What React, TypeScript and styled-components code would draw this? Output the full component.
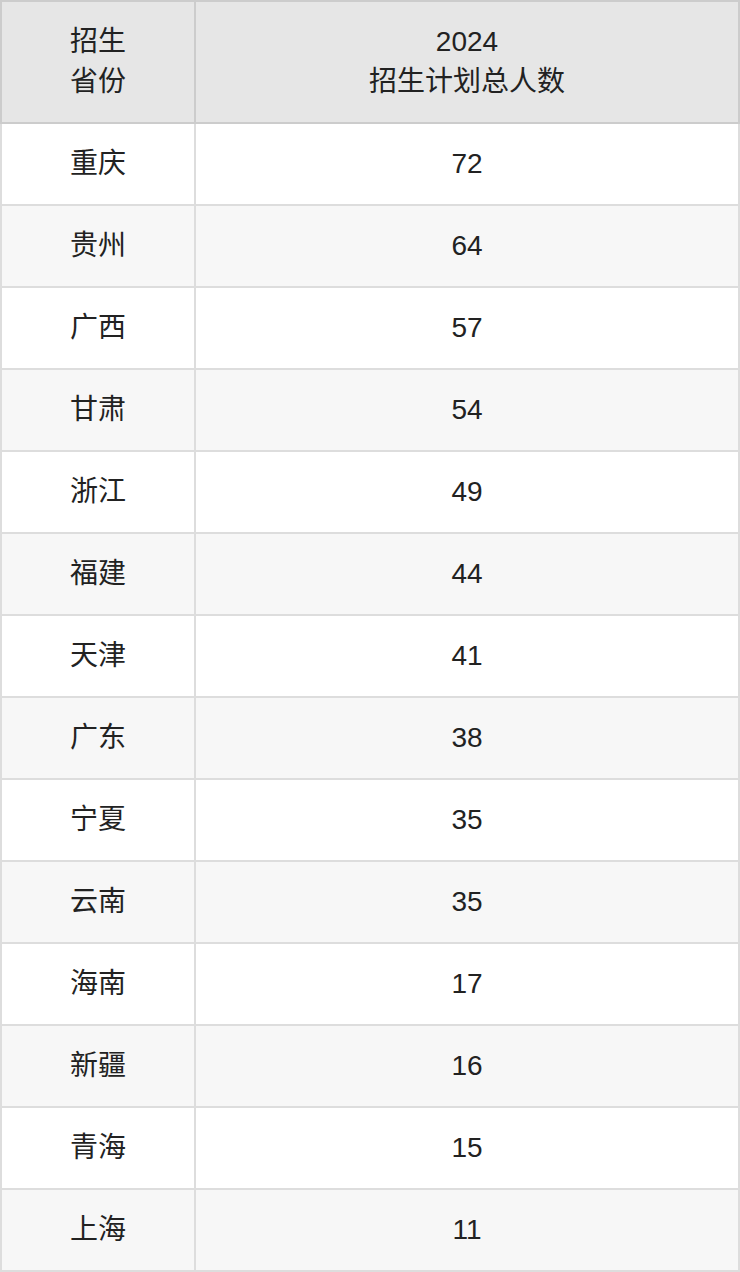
import React from "react";
import styled, { createGlobalStyle } from "styled-components";

const Global = createGlobalStyle`
  html, body { margin: 0; padding: 0; background: #ffffff; }
  body { font-family: "Liberation Sans", Arial, "Noto Sans CJK SC", sans-serif; }
`;

const Table = styled.table`
  width: 740px;
  border-collapse: collapse;
  table-layout: fixed;
  color: #222222;
  font-size: 28px;
  line-height: 40px;
  font-family: "Liberation Sans", Arial, "Noto Sans CJK SC", sans-serif;
`;

const HeadCell = styled.th`
  background: #e6e6e6;
  border: 2px solid #cccccc;
  font-weight: normal;
  text-align: center;
  padding: 20px 8px;
`;

const Row = styled.tr<{ $alt: boolean }>`
  background: ${(p) => (p.$alt ? "#f7f7f7" : "#ffffff")};
`;

const Cell = styled.td`
  border: 2px solid #dddddd;
  text-align: center;
  padding: 20px 8px;
`;

const data: [string, number][] = [
  ["重庆", 72],
  ["贵州", 64],
  ["广西", 57],
  ["甘肃", 54],
  ["浙江", 49],
  ["福建", 44],
  ["天津", 41],
  ["广东", 38],
  ["宁夏", 35],
  ["云南", 35],
  ["海南", 17],
  ["新疆", 16],
  ["青海", 15],
  ["上海", 11],
];

export default function App() {
  return (
    <>
      <Global />
      <Table>
        <colgroup>
          <col style={{ width: 194 }} />
          <col />
        </colgroup>
        <thead>
          <tr>
            <HeadCell>
              招生
              <br />
              省份
            </HeadCell>
            <HeadCell>
              2024
              <br />
              招生计划总人数
            </HeadCell>
          </tr>
        </thead>
        <tbody>
          {data.map(([name, n], i) => (
            <Row key={name} $alt={i % 2 === 1}>
              <Cell>{name}</Cell>
              <Cell>{n}</Cell>
            </Row>
          ))}
        </tbody>
      </Table>
    </>
  );
}
